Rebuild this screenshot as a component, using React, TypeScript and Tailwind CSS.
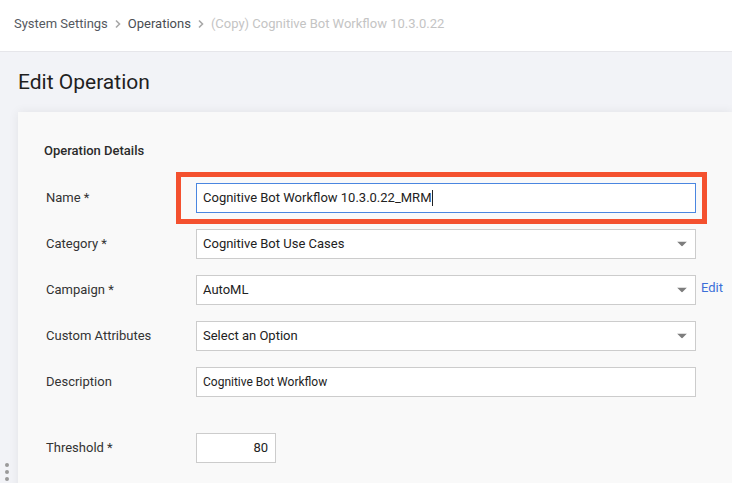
import React from "react";

const font = { fontFamily: "Roboto, 'Liberation Sans', Arial, sans-serif" };

function Chevron() {
  return (
    <svg width="8" height="10" viewBox="0 0 8 10" className="mx-[6px]">
      <path d="M2 1.5 L5.5 5 L2 8.5" fill="none" stroke="#a8a8a8" strokeWidth="1.6" />
    </svg>
  );
}

function Caret() {
  return (
    <svg width="10" height="5" viewBox="0 0 10 5" className="absolute right-[8px] top-1/2 -translate-y-1/2">
      <path d="M0 0 L10 0 L5 5 Z" fill="#7d7d7d" />
    </svg>
  );
}

function Row({ label, children, extra }: { label: string; children: React.ReactNode; extra?: React.ReactNode }) {
  return (
    <div className="flex items-center h-[30px]">
      <div className="w-[152px] pl-[2px] text-[13px] text-[#333]">{label}</div>
      {children}
      {extra}
    </div>
  );
}

function SelectBox({ value }: { value: string }) {
  return (
    <div className="relative w-[500px] h-[30px] bg-white border border-[#cccccc] flex items-center pl-[6px] text-[13px] text-[#222]">
      {value}
      <Caret />
    </div>
  );
}

export default function App() {
  return (
    <div className="w-[732px] h-[483px] overflow-hidden bg-[#f2f3f7] relative" style={font}>
      {/* breadcrumb bar */}
      <div className="h-[52px] bg-white border-b border-[#e6e6ea] flex items-center pl-[14px] pb-[4px] text-[13px]">
        <span className="text-[#55595f]">System Settings</span>
        <Chevron />
        <span className="text-[#4a4d52]">Operations</span>
        <Chevron />
        <span className="text-[#c4c4c4]">(Copy) Cognitive Bot Workflow 10.3.0.22</span>
      </div>

      {/* page title */}
      <div className="h-[60px] pl-[18px] pt-[16px]">
        <h1 className="text-[21px] leading-[28px] text-[#1f1f1f]">Edit Operation</h1>
      </div>

      {/* form card */}
      <div className="ml-[18px] bg-[#f9f9f9] shadow-[0_0_10px_rgba(0,0,0,0.07)] pl-[26px] pt-[31px] h-[400px]">
        <div className="text-[13px] leading-[16px] font-medium text-[#2b2b2b]">Operation Details</div>

        <div className="mt-[24px] flex flex-col gap-[16px]">
          <Row label="Name *">
            <div className="relative">
              <div className="w-[500px] h-[30px] bg-white border border-[#4a86e0] flex items-center pl-[6px] text-[13px] text-[#222]">
                Cognitive Bot Workflow 10.3.0.22_MRM
                <span className="inline-block w-[1px] h-[16px] bg-[#222] ml-[1px]" />
              </div>
              <div className="absolute left-[-20px] right-[-11px] top-[-11px] bottom-[-11px] border-[5px] border-[#f4512f] pointer-events-none" />
            </div>
          </Row>
          <Row label="Category *">
            <SelectBox value="Cognitive Bot Use Cases" />
          </Row>
          <Row
            label="Campaign *"
            extra={<a className="ml-[5px] text-[13px] text-[#3c6fd8] -mt-[4px]">Edit</a>}
          >
            <SelectBox value="AutoML" />
          </Row>
          <Row label="Custom Attributes">
            <SelectBox value="Select an Option" />
          </Row>
          <Row label="Description">
            <div className="w-[500px] h-[30px] bg-white border border-[#cccccc] flex items-center pl-[6px] text-[12px] text-[#222]">
              Cognitive Bot Workflow
            </div>
          </Row>
          <div className="mt-[20px]">
            <Row label="Threshold *">
              <div className="w-[80px] h-[30px] bg-white border border-[#cccccc] flex items-center justify-end pr-[7px] text-[13px] text-[#222]">
                80
              </div>
            </Row>
          </div>
        </div>
      </div>

      {/* resize handle */}
      <div className="absolute left-[5px] top-[463px] flex flex-col gap-[3px]">
        <span className="w-[4px] h-[4px] rounded-full bg-[#9a9a9a]" />
        <span className="w-[4px] h-[4px] rounded-full bg-[#9a9a9a]" />
        <span className="w-[4px] h-[4px] rounded-full bg-[#9a9a9a]" />
      </div>
    </div>
  );
}
